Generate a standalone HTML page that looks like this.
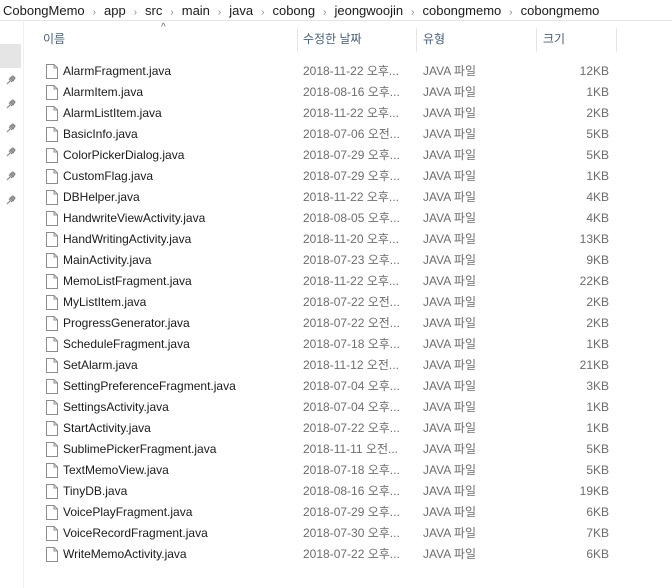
<!DOCTYPE html>
<html><head><meta charset="utf-8"><style>
body{margin:0;width:672px;height:588px;background:#fff;overflow:hidden;position:relative;font-family:"Liberation Sans","Noto Sans CJK KR",sans-serif;font-size:12px;}
.bc{position:absolute;top:3px;left:3px;font-size:13px;line-height:16px;color:#1a1a1a;white-space:nowrap;}
.bc span.s{color:#888;font-size:10px;margin:0 8px;}
.hl{position:absolute;top:20px;left:0;width:672px;height:1px;background:#e5e5e5;}
.lp{position:absolute;top:21px;left:23px;width:1px;height:567px;background:#f0f0f0;}
.gb{position:absolute;left:0;top:44px;width:21px;height:24px;background:#e5e5e5;}
.pin{position:absolute;left:6px;width:10px;height:10px;}
.h{position:absolute;top:32px;color:#4c607a;font-size:12px;line-height:15px;}
.sep{position:absolute;top:28px;width:1px;height:24px;background:#e5e5e5;}
.row{position:absolute;left:0;height:21px;width:672px;}
.row div{position:absolute;top:3px;white-space:nowrap;line-height:15px;height:15px;}
.n{left:63px;color:#1a1a1a;}
.d{left:303px;color:#6d6d6d;}
.t{left:423px;color:#6d6d6d;}
.z{right:63px;color:#6d6d6d;text-align:right;}
.ic{position:absolute;left:46px;top:3px;}
</style></head><body>
<div class="bc">CobongMemo<span class="s">›</span>app<span class="s">›</span>src<span class="s">›</span>main<span class="s">›</span>java<span class="s">›</span>cobong<span class="s">›</span>jeongwoojin<span class="s">›</span>cobongmemo<span class="s">›</span>cobongmemo</div>
<div class="hl"></div>
<div class="lp"></div>
<div class="gb"></div>
<svg class="pin" style="top:75px" viewBox="0 0 10 10"><path d="M1 9L4 6M3 4L6 7M4 3L7 1L9 3L7 6Z" stroke="#8a8a8a" fill="#9a9a9a" stroke-width="1.2"/></svg>
<svg class="pin" style="top:99px" viewBox="0 0 10 10"><path d="M1 9L4 6M3 4L6 7M4 3L7 1L9 3L7 6Z" stroke="#8a8a8a" fill="#9a9a9a" stroke-width="1.2"/></svg>
<svg class="pin" style="top:123px" viewBox="0 0 10 10"><path d="M1 9L4 6M3 4L6 7M4 3L7 1L9 3L7 6Z" stroke="#8a8a8a" fill="#9a9a9a" stroke-width="1.2"/></svg>
<svg class="pin" style="top:147px" viewBox="0 0 10 10"><path d="M1 9L4 6M3 4L6 7M4 3L7 1L9 3L7 6Z" stroke="#8a8a8a" fill="#9a9a9a" stroke-width="1.2"/></svg>
<svg class="pin" style="top:171px" viewBox="0 0 10 10"><path d="M1 9L4 6M3 4L6 7M4 3L7 1L9 3L7 6Z" stroke="#8a8a8a" fill="#9a9a9a" stroke-width="1.2"/></svg>
<svg class="pin" style="top:195px" viewBox="0 0 10 10"><path d="M1 9L4 6M3 4L6 7M4 3L7 1L9 3L7 6Z" stroke="#8a8a8a" fill="#9a9a9a" stroke-width="1.2"/></svg>
<div style="position:absolute;left:161px;top:23px;color:#666;font-size:10px;line-height:10px">^</div>
<div class="h" style="left:43px">이름</div>
<div class="sep" style="left:297px"></div>
<div class="h" style="left:303px">수정한 날짜</div>
<div class="sep" style="left:416px"></div>
<div class="h" style="left:423px">유형</div>
<div class="sep" style="left:536px"></div>
<div class="h" style="left:543px">크기</div>
<div class="sep" style="left:616px"></div>
<div id="rows"></div>
<script>
var r=[["AlarmFragment.java","2018-11-22 오후...","12KB"],["AlarmItem.java","2018-08-16 오후...","1KB"],["AlarmListItem.java","2018-11-22 오후...","2KB"],["BasicInfo.java","2018-07-06 오전...","5KB"],["ColorPickerDialog.java","2018-07-29 오후...","5KB"],["CustomFlag.java","2018-07-29 오후...","1KB"],["DBHelper.java","2018-11-22 오후...","4KB"],["HandwriteViewActivity.java","2018-08-05 오후...","4KB"],["HandWritingActivity.java","2018-11-20 오후...","13KB"],["MainActivity.java","2018-07-23 오후...","9KB"],["MemoListFragment.java","2018-11-22 오후...","22KB"],["MyListItem.java","2018-07-22 오전...","2KB"],["ProgressGenerator.java","2018-07-22 오전...","2KB"],["ScheduleFragment.java","2018-07-18 오후...","1KB"],["SetAlarm.java","2018-11-12 오전...","21KB"],["SettingPreferenceFragment.java","2018-07-04 오후...","3KB"],["SettingsActivity.java","2018-07-04 오후...","1KB"],["StartActivity.java","2018-07-22 오후...","1KB"],["SublimePickerFragment.java","2018-11-11 오전...","5KB"],["TextMemoView.java","2018-07-18 오후...","5KB"],["TinyDB.java","2018-08-16 오후...","19KB"],["VoicePlayFragment.java","2018-07-29 오후...","6KB"],["VoiceRecordFragment.java","2018-07-30 오후...","7KB"],["WriteMemoActivity.java","2018-07-22 오후...","6KB"]];
var h="";r.forEach(function(x,i){h+='<div class="row" style="top:'+(61+i*21)+'px"><svg class="ic" width="12" height="15" viewBox="0 0 12 15"><path d="M0.5 0.5H8L11.5 4V14.5H0.5Z" fill="#fff" stroke="#8c8c8c"/><path d="M8 0.5V4H11.5" fill="none" stroke="#8c8c8c"/></svg><div class="n">'+x[0]+'</div><div class="d">'+x[1]+'</div><div class="t">JAVA 파일</div><div class="z">'+x[2]+'</div></div>';});
document.getElementById("rows").innerHTML=h;
</script>
</body></html>
